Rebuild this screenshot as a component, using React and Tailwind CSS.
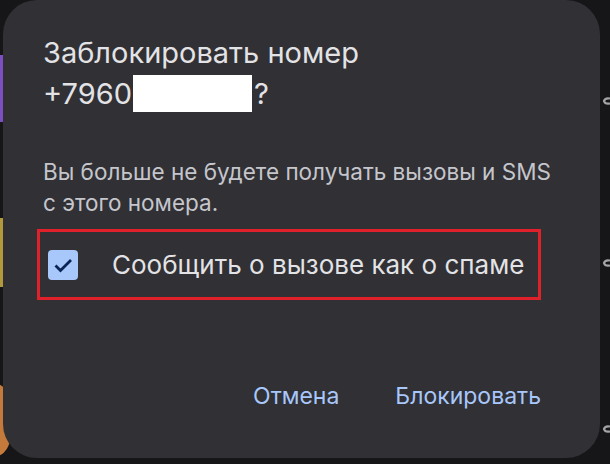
import React from "react";

function Hook({ top }) {
  return (
    <svg className="absolute right-0 w-[8px] h-[10px]" style={{ top }} viewBox="0 0 8 10">
      <path d="M8 2.5 Q3 1.5 2 5 Q3 8.5 8 7.5" fill="none" stroke="#a5a5a8" strokeWidth="2.2" />
    </svg>
  );
}

export default function App() {
  return (
    <div
      className="relative w-[610px] h-[464px] bg-[#161618] overflow-hidden"
      style={{ fontFamily: "Inter, Roboto, 'Noto Sans', sans-serif" }}
    >
      {/* background fragments peeking */}
      <div className="absolute left-0 top-[55px] w-[3px] h-[67px] bg-[#7b4fc0]" />
      <div className="absolute left-0 top-[218px] w-[3px] h-[69px] bg-[#b09a3c]" />
      <div className="absolute left-[-30px] top-[382px] w-[40px] h-[76px] rounded-full bg-[#c47a3a]" />
      <Hook top={96} />
      <Hook top={258} />
      <Hook top={424} />

      <div className="absolute left-[3px] top-0 w-[597px] h-[458px] rounded-[34px] bg-[#303035] flex flex-col px-[40px] pt-[32px]">
        <div className="text-[29px] leading-[41px] text-[#e3e3e6]">
          <div>Заблокировать номер</div>
          <div className="flex items-center">
            <span>+7960</span>
            <span className="inline-block w-[119px] h-[37px] bg-white ml-[1px]" />
            <span className="ml-[2px]">?</span>
          </div>
        </div>
        <div className="mt-[42px] text-[22.5px] leading-[31px] text-[#c5c6cc] whitespace-nowrap">
          Вы больше не будете получать вызовы и SMS
          <br />с этого номера.
        </div>
        <div className="mt-[11px] ml-[-6px] w-[504px] h-[71px] border-[3px] border-[#e0212b] flex items-center">
          <div className="ml-[8px] w-[30px] h-[30px] rounded-[4px] bg-[#a8c7fa] flex items-center justify-center">
            <svg width="24" height="24" viewBox="0 0 24 24">
              <path d="M4.5 12.5l5 5L20 7" fill="none" stroke="#0b2456" strokeWidth="2.8" />
            </svg>
          </div>
          <div className="ml-[34px] text-[26px] text-[#e3e3e6] whitespace-nowrap">Сообщить о вызове как о спаме</div>
        </div>
        <div className="mt-[82px] flex justify-end gap-[56px] pr-[19px] text-[23px] leading-[29px] text-[#a8c7fa]">
          <span>Отмена</span>
          <span>Блокировать</span>
        </div>
      </div>
    </div>
  );
}
